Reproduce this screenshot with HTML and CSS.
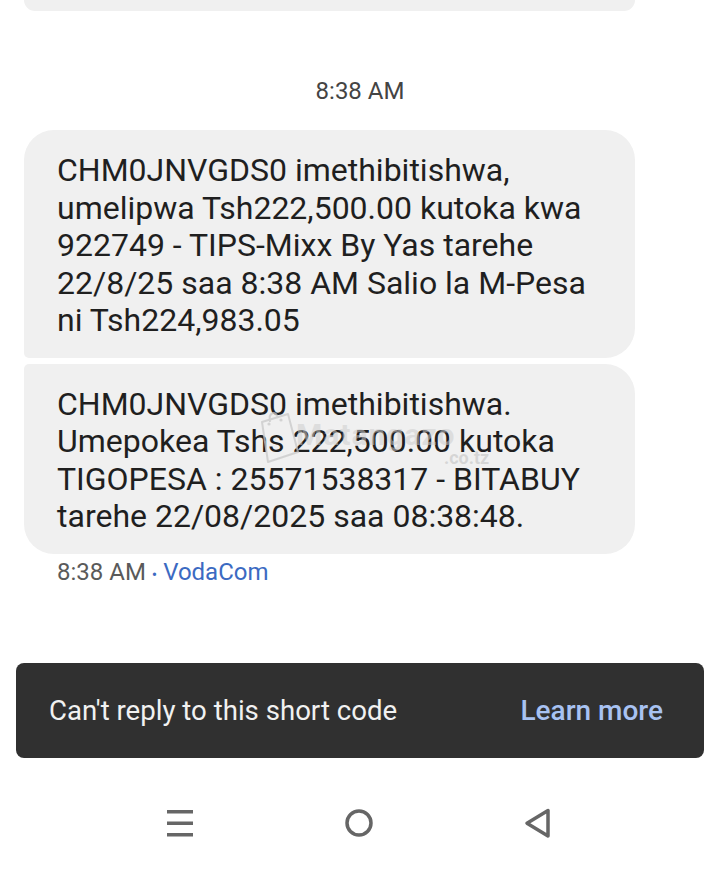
FILE: index.html
```html
<!DOCTYPE html>
<html lang="sw">
<head>
<meta charset="utf-8">
<title>Messages</title>
<link rel="stylesheet" href="styles.css">
</head>
<body>
<div class="screen">
  <div class="bubble bubble-prev"></div>

  <div class="day-time">8:38 AM</div>

  <div class="thread">
    <div class="bubble bubble-first">CHM0JNVGDS0 imethibitishwa,<br>umelipwa Tsh222,500.00 kutoka kwa<br>922749 - TIPS-Mixx By Yas tarehe<br>22/8/25 saa 8:38 AM Salio la M-Pesa<br>ni Tsh224,983.05</div>
    <div class="bubble bubble-last">CHM0JNVGDS0 imethibitishwa.<br>Umepokea Tshs 222,500.00 kutoka<br>TIGOPESA : 25571538317 - BITABUY<br>tarehe 22/08/2025 saa 08:38:48.
      <div class="watermark">
        <svg class="wm-bag" viewBox="0 0 50 60" width="50" height="60">
          <path d="M8 14 L34 6 L44 44 L14 54 Z" fill="none" stroke="#c9c9c9" stroke-width="2" stroke-linejoin="round"/>
          <path d="M16 14 C14 4 22 2 24 10" fill="none" stroke="#c9c9c9" stroke-width="2"/>
          <circle cx="15" cy="16" r="1.6" fill="#c9c9c9"/>
          <circle cx="27" cy="12" r="1.6" fill="#c9c9c9"/>
        </svg>
        <span class="wm-name">Matangazo</span>
        <span class="wm-domain">.co.tz</span>
      </div>
    </div>
    <div class="meta">8:38 AM <span class="dot">•</span> <span class="sender">VodaCom</span></div>
  </div>

  <div class="snackbar">
    <span class="snack-text">Can't reply to this short code</span>
    <span class="snack-action">Learn more</span>
  </div>

  <nav class="navbar">
    <svg class="nav-icon" viewBox="0 0 30 30" width="30" height="30">
      <rect x="2" y="2" width="26" height="3.5" fill="#666"/>
      <rect x="2" y="13.5" width="26" height="3.5" fill="#666"/>
      <rect x="2" y="25" width="26" height="3.5" fill="#666"/>
    </svg>
    <svg class="nav-icon" viewBox="0 0 30 30" width="30" height="30">
      <circle cx="15" cy="15" r="12" fill="none" stroke="#666" stroke-width="3.5"/>
    </svg>
    <svg class="nav-icon" viewBox="0 0 30 30" width="30" height="30">
      <path d="M25 2.5 L25 28 L4 15.2 Z" fill="none" stroke="#666" stroke-width="3.5" stroke-linejoin="round"/>
    </svg>
  </nav>
</div>
</body>
</html>
```
FILE: styles.css
```css
* { box-sizing: border-box; }

html, body {
  margin: 0;
  padding: 0;
  background: #ffffff;
}

body {
  font-family: Roboto, "Noto Sans", "Liberation Sans", sans-serif;
  color: #1f1f1f;
}

.screen {
  width: 720px;
  height: 870px;
  overflow: hidden;
  display: flex;
  flex-direction: column;
}

.bubble {
  background: #f0f0f0;
  margin-left: 24px;
  width: 611px;
  font-size: 32px;
  line-height: 37.5px;
  padding: 22px 20px 18px 33px;
  border-radius: 30px;
}

.bubble-prev {
  height: 11px;
  padding: 0;
  border-radius: 0 0 30px 30px;
}

.day-time {
  margin-top: 66px;
  text-align: center;
  font-size: 24px;
  line-height: 28px;
  color: #444444;
}

.thread {
  margin-top: 25px;
  display: flex;
  flex-direction: column;
  gap: 6px;
}

.bubble-first {
  border-radius: 30px 30px 30px 5px;
}

.bubble-last {
  position: relative;
  border-radius: 5px 30px 30px 30px;
}

.watermark {
  position: absolute;
  left: 230px;
  top: 44px;
  width: 240px;
  height: 70px;
  pointer-events: none;
}

.wm-bag {
  position: absolute;
  left: 0;
  top: 0;
  opacity: 0.75;
}

.wm-name {
  position: absolute;
  left: 42px;
  top: 10px;
  font-size: 30px;
  line-height: 34px;
  font-weight: 700;
  color: rgba(205, 205, 205, 0.55);
  letter-spacing: 1px;
}

.wm-domain {
  position: absolute;
  left: 190px;
  top: 40px;
  font-size: 18px;
  line-height: 20px;
  font-weight: 700;
  color: rgba(195, 195, 195, 0.6);
}

.meta {
  margin-top: -2px;
  padding-left: 57px;
  font-size: 24px;
  line-height: 28px;
  color: #5a5a5a;
}

.dot {
  color: #3b6ac2;
  font-size: 16px;
}

.sender {
  color: #3b6ac2;
}

.snackbar {
  margin: 74px 16px 0 16px;
  height: 95px;
  background: #303030;
  border-radius: 8px;
  display: flex;
  align-items: center;
  justify-content: space-between;
  padding: 0 41px 0 33px;
}

.snack-text {
  color: #f1f1f1;
  font-size: 27.6px;
}

.snack-action {
  color: #a8c2f2;
  font-size: 28px;
  font-weight: 500;
}

.navbar {
  margin-top: 50px;
  display: flex;
  justify-content: space-between;
  align-items: center;
  padding: 0 167px 0 165px;
  height: 30px;
}

.nav-icon {
  display: block;
}
```
